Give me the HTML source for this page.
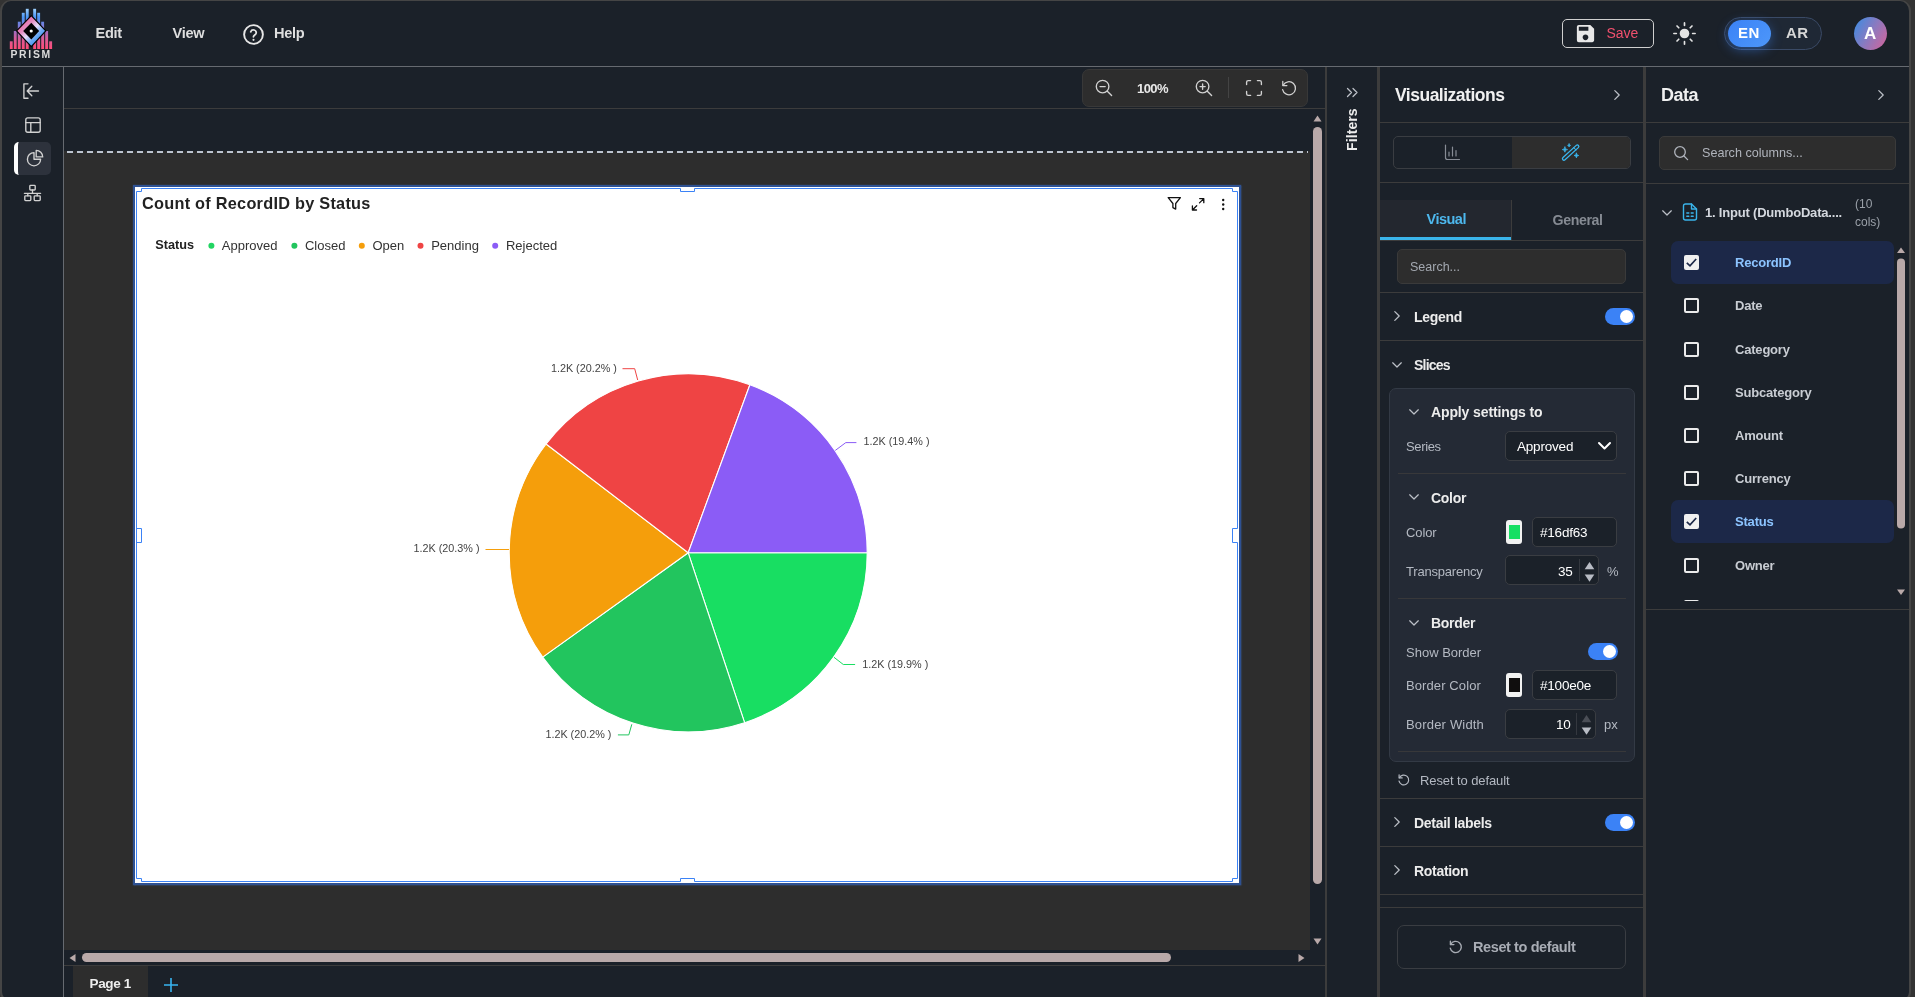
<!DOCTYPE html>
<html lang="en">
<head>
<meta charset="utf-8">
<title>PRISM - Report Designer</title>
<style>
*{box-sizing:border-box;margin:0;padding:0}
html,body{width:1915px;height:997px;overflow:hidden;background:#333333;font-family:"Liberation Sans",sans-serif;color:#e4e4e4}
.abs{position:absolute}
#win{position:absolute;left:0;top:0;width:1911px;height:1003px;background:#1b2129;border:2px solid #454545;border-top-width:1px;border-radius:11px;overflow:hidden}
#app{position:absolute;left:-2px;top:-1px;width:1915px;height:997px;will-change:transform}
.hl{position:absolute;height:1px;background:#3c3c3c}
.vl{position:absolute;width:1px;background:#3c3c3c}
.t{position:absolute;white-space:nowrap;line-height:1}
svg{position:absolute;overflow:visible}
.ico{fill:none;stroke:#d2d2d2;stroke-width:1.35;stroke-linecap:round;stroke-linejoin:round}
.mn{font-size:14.6px;font-weight:bold;color:#dedede;letter-spacing:-0.3px}

.h1{font-size:17.5px;font-weight:bold;color:#f0f0f0;letter-spacing:-0.5px}
.sec{font-size:14px;font-weight:bold;color:#ececec;letter-spacing:-0.3px}
.lb{font-size:13px;color:#b4b9c2;letter-spacing:-0.1px}
.inp{position:absolute;background:#1b2129;border:1px solid #3a3d42;border-radius:5px}
.val{font-size:13.5px;color:#fff;letter-spacing:-0.2px}
.tg{position:absolute;width:30px;height:17px;border-radius:9px;background:#3b82f6}
.tg:after{content:"";position:absolute;right:2px;top:2px;width:13px;height:13px;border-radius:50%;background:#fff}
.chev{fill:none;stroke:#bcc0c7;stroke-width:1.25;stroke-linecap:round;stroke-linejoin:round}
.sw{position:absolute;width:16px;height:24px;background:#f2f2f2;border-radius:3px}
.sw i{position:absolute;left:2.500px;top:5px;width:11px;height:14px}
.col{font-size:13px;font-weight:bold;color:#c9cdd3;letter-spacing:-0.2px}
.cb{position:absolute;width:15px;height:15px;border:2px solid #ebebeb;border-radius:2px}
.cbx{position:absolute;width:15px;height:15px;background:#f0f0f0;border-radius:2px}
/* SECTION-CSS */
</style>
</head>
<body>
<div id="win"><div id="app">

<!-- ===== TOP BAR ===== -->
<div class="hl" style="left:0;top:66px;width:1915px;background:#666a70"></div>

<!-- logo -->
<svg style="left:0;top:0" width="64" height="66" viewBox="0 0 64 66">
 <defs>
  <linearGradient id="lgBars" gradientUnits="userSpaceOnUse" x1="0" y1="8" x2="0" y2="49">
   <stop offset="0" stop-color="#a5d6ff"/><stop offset="0.22" stop-color="#4a96f5"/><stop offset="0.5" stop-color="#8b74d0"/><stop offset="0.75" stop-color="#d85c98"/><stop offset="1" stop-color="#ff4d78"/>
  </linearGradient>
  <linearGradient id="lgDia" gradientUnits="userSpaceOnUse" x1="22" y1="22" x2="41" y2="41">
   <stop offset="0" stop-color="#ea6aa6"/><stop offset="0.25" stop-color="#e58cc0"/><stop offset="0.5" stop-color="#e6dcfa"/><stop offset="0.75" stop-color="#6aa8f2"/><stop offset="1" stop-color="#2f8ef5"/>
  </linearGradient>
 </defs>
 <g fill="url(#lgBars)">
  <rect x="9.8" y="41.3" width="2.9" height="7.7"/><rect x="13.8" y="31" width="2.9" height="18"/><rect x="17.8" y="21.7" width="2.9" height="27.3"/><rect x="21.8" y="12.8" width="2.9" height="36.2"/><rect x="25.8" y="8.8" width="2.9" height="40.2"/>
  <rect x="33.2" y="8.8" width="2.9" height="40.2"/><rect x="37.2" y="12.8" width="2.9" height="36.2"/><rect x="41.2" y="21.7" width="2.9" height="27.3"/><rect x="45.2" y="31" width="2.9" height="18"/><rect x="49.2" y="41.3" width="2.9" height="7.7"/>
 </g>
 <path d="M31.3 15.6 L45.8 30.8 L31.3 46.6 L16.6 30.8 Z" fill="url(#lgDia)" stroke="#000" stroke-width="1.2" stroke-linejoin="round"/>
 <path d="M31.3 22.8 L39.2 30.9 L31.3 39.6 L23.2 30.9 Z" fill="#000"/>
 <circle cx="31.2" cy="31" r="1.6" fill="#fff"/>
 <text x="31.2" y="58" text-anchor="middle" font-family="Liberation Sans, sans-serif" font-weight="bold" font-size="10.4" letter-spacing="1.7" fill="#dcdcdc">PRISM</text>
</svg>
<div class="t mn" style="left:95.500px;top:26px">Edit</div>
<div class="t mn" style="left:172.500px;top:26px">View</div>
<svg style="left:241.500px;top:22.800px" width="23" height="23" viewBox="0 0 24 24"><circle cx="12" cy="12" r="9.800" fill="none" stroke="#e6e6e6" stroke-width="2"/><path d="M9.1 9.2a3 3 0 0 1 5.8 1c0 2-3 2.6-3 4.2" fill="none" stroke="#e6e6e6" stroke-width="1.8" stroke-linecap="round"/><circle cx="12" cy="17.6" r="1.1" fill="#e6e6e6"/></svg>
<div class="t mn" style="left:274px;top:26px">Help</div>

<!-- save button -->
<div class="abs" style="left:1562px;top:19px;width:92px;height:29px;border:1px solid #cfcfcf;border-radius:5px"></div>
<svg style="left:1574px;top:22px" width="23" height="23" viewBox="0 0 24 24"><path fill="#e8e8e8" d="M17 3H5a2 2 0 0 0-2 2v14a2 2 0 0 0 2 2h14c1.100 0 2-.9 2-2V7l-4-4zm-5 16c-1.660 0-3-1.340-3-3s1.340-3 3-3 3 1.340 3 3-1.340 3-3 3zm3-10H5V5h10v4z"/></svg>
<div class="t" style="left:1606.500px;top:26px;font-size:14px;color:#f0506e;letter-spacing:0px">Save</div>
<!-- sun -->
<svg style="left:1672px;top:21px" width="25" height="25" viewBox="0 0 24 24"><circle cx="12" cy="12" r="4.6" fill="#e4e4e4"/><g stroke="#e4e4e4" stroke-width="1.6" stroke-linecap="round"><path d="M12 1.800v2.400M12 19.800v2.400M1.800 12h2.400M19.800 12h2.400M4.800 4.800l1.700 1.700M17.500 17.500l1.700 1.700M4.800 19.200l1.700-1.700M17.500 6.500l1.700-1.700"/></g></svg>
<!-- language toggle -->
<div class="abs" style="left:1724px;top:17px;width:98px;height:33px;border:1px solid #3a4a66;border-radius:17px;background:#1f2835"></div>
<div class="abs" style="left:1728px;top:20px;width:43px;height:27px;border-radius:14px;background:linear-gradient(135deg,#3b82f6,#4d97fa);box-shadow:0 3px 12px rgba(59,130,246,0.45)"></div>
<div class="t" style="left:1738px;top:25px;font-size:15px;font-weight:bold;color:#fff;letter-spacing:0.4px">EN</div>
<div class="t" style="left:1786px;top:25px;font-size:15px;font-weight:bold;color:#d6d6d6;letter-spacing:0.4px">AR</div>
<!-- avatar -->
<div class="abs" style="left:1854px;top:17px;width:33px;height:33px;border-radius:50%;background:linear-gradient(120deg,#3f8be0 5%,#8a7ac0 50%,#d0659c 95%)"></div>
<div class="t" style="left:1864px;top:25px;font-size:17px;font-weight:bold;color:#fff">A</div>


<!-- ===== LEFT SIDEBAR ===== -->
<div class="vl" style="left:63px;top:67px;height:930px;background:#666a70"></div>

<svg style="left:21px;top:81px" width="20" height="20" viewBox="0 0 20 20" class="ico"><path d="M7 2.800H2.900v14.400H7"/><path d="M17.500 10H6.500M10.800 5.300L6.200 10l4.600 4.700"/></svg>
<svg style="left:23px;top:115px" width="20" height="20" viewBox="0 0 20 20" class="ico"><rect x="2.800" y="2.800" width="14.400" height="14.400" rx="2"/><path d="M2.800 7.600h14.400M7.800 7.600v9.600"/></svg>
<div class="abs" style="left:14px;top:142px;width:37px;height:33px;background:#2d323c;border-radius:5px;border-left:4px solid #fff"></div>
<svg style="left:25px;top:148px" width="20" height="20" viewBox="0 0 20 20" class="ico"><path d="M9 4.600A6.600 6.600 0 1 0 15.600 11.200H9z"/><path d="M11.200 2.400v6.500h6.500A6.500 6.500 0 0 0 11.200 2.400z"/></svg>
<svg style="left:22px;top:183px" width="21" height="20" viewBox="0 0 21 20" class="ico"><rect x="7.800" y="2.400" width="5.400" height="4.600" rx="0.800"/><rect x="2.800" y="12.800" width="6" height="4.800" rx="0.800"/><rect x="12.200" y="12.800" width="6" height="4.800" rx="0.800"/><path d="M10.500 7v3.300M2.400 10.300h16.200M5.800 10.300v2.500M15.200 10.300v2.500"/></svg>


<!-- ===== CANVAS ===== -->
<div class="hl" style="left:64px;top:108px;width:1261px"></div>
<div class="abs" style="left:64px;top:151px;width:1246px;height:799px;background:#2d2d2d"></div>

<!-- zoom toolbar -->
<div class="abs" style="left:1082px;top:69px;width:226px;height:38px;background:#2d2d2d;border:1px solid #383838;border-radius:7px"></div>
<svg style="left:1094px;top:78px" width="20" height="20" viewBox="0 0 20 20" class="ico" stroke-width="1.5"><circle cx="8.600" cy="8.600" r="6.300"/><path d="M13.300 13.300L17.600 17.600M6 8.600h5.200"/></svg>
<div class="t" style="left:1137px;top:82px;font-size:13px;font-weight:bold;color:#e8e8e8;letter-spacing:-0.55px">100%</div>
<svg style="left:1194px;top:78px" width="20" height="20" viewBox="0 0 20 20" class="ico"><circle cx="8.600" cy="8.600" r="6.300"/><path d="M13.300 13.300L17.600 17.600M6 8.600h5.200M8.600 6v5.200"/></svg>
<div class="vl" style="left:1228px;top:77px;height:21px;background:#444"></div>
<svg style="left:1244px;top:78px" width="20" height="20" viewBox="0 0 20 20" class="ico"><path d="M2.600 6.600V4.200Q2.600 2.600 4.200 2.600H6.600M13.400 2.600h2.400Q17.400 2.600 17.400 4.200V6.600M17.400 13.400v2.400Q17.400 17.400 15.800 17.400H13.400M6.600 17.400H4.200Q2.600 17.400 2.600 15.800V13.400"/></svg>
<svg style="left:1279.500px;top:78.500px" width="18.600" height="18.600" viewBox="0 0 20 20" class="ico" stroke-width="1.450"><path d="M3.400 6.800A7 7 0 1 1 2.800 11.400"/><path d="M3 2.600v4.400h4.400"/></svg>

<!-- page boundary dashed line -->
<svg style="left:0;top:0" width="1320" height="160"><path d="M67 152H1308" stroke="#bdc4cf" stroke-width="2" stroke-dasharray="6 4" fill="none"/></svg>

<!-- vertical scrollbar -->
<svg style="left:1310px;top:109px" width="15" height="841"><path d="M7.500 6.500l4 6h-8z" fill="#b9a9a9"/><rect x="3" y="18" width="9" height="757" rx="4.500" fill="#b9a9a9"/><path d="M7.500 835.500l4 -6h-8z" fill="#b9a9a9"/></svg>
<!-- horizontal scrollbar -->
<svg style="left:64px;top:950px" width="1246" height="15"><path d="M5.500 8l6-4v8z" fill="#b9a9a9"/><rect x="18" y="3" width="1089" height="9" rx="4.500" fill="#b9a9a9"/><path d="M1240.500 8l-6-4v8z" fill="#b9a9a9"/></svg>
<div class="hl" style="left:64px;top:965px;width:1261px"></div>

<!-- page tabs -->
<div class="abs" style="left:73px;top:966px;width:75px;height:31px;background:#2d2d2d"></div>
<div class="t" style="left:89.500px;top:977px;font-size:13.500px;font-weight:bold;color:#eee;letter-spacing:-0.35px">Page 1</div>
<svg style="left:163px;top:977px" width="16" height="16"><path d="M8 1v14M1 8h14" stroke="#38b4f0" stroke-width="1.600" fill="none"/></svg>

<!-- chart widget -->
<div class="abs" style="left:135px;top:187px;width:1104px;height:696px;background:#fff;box-shadow:0 0 0 2px #2e5192,0 0 1.500px 2.500px #3a5f9f"></div>
<svg style="left:135px;top:187px" width="1104" height="696" viewBox="135 187 1104 696">
 <path d="M136.500 191.500V878.500H141.500V881.500H680.500V878.500H694.500V881.500H1232.500V878.500H1237.500V542.500H1232.500V528.500H1237.500V191.500H1232.500V188.500H694.500V191.500H680.500V188.500H141.500V191.500ZM136.500 528.500H141.500V542.500H136.500" fill="none" stroke="#3b82f6" stroke-width="1"/>
 <text x="142" y="208.600" font-family="Liberation Sans, sans-serif" font-weight="bold" font-size="16.300" letter-spacing="0.260" fill="#222">Count of RecordID by Status</text>
 <g fill="none" stroke="#111" stroke-width="1.300" stroke-linejoin="round" stroke-linecap="round">
  <path d="M1168.200 197.600h12.200l-4.700 5.900v5.600l-2.800-1.500v-4.100z"/>
  <path d="M1203.800 198.600l-4.300 4.300M1199.700 198.600h4.100v4.100M1192.400 210l4.300-4.300M1192.400 205.900v4.100h4.100"/>
 </g>
 <g fill="#111"><circle cx="1223.200" cy="200" r="1.200"/><circle cx="1223.200" cy="204.500" r="1.200"/><circle cx="1223.200" cy="209" r="1.200"/></g>
 <g font-family="Liberation Sans, sans-serif" font-size="13" fill="#333">
  <text x="155.200" y="248.600" font-weight="bold" font-size="12.700" fill="#222">Status</text>
  <circle cx="211.400" cy="245.700" r="3" fill="#22d562"/><text x="221.800" y="250">Approved</text>
  <circle cx="294.400" cy="245.700" r="3" fill="#22c55e"/><text x="304.900" y="250">Closed</text>
  <circle cx="361.800" cy="245.700" r="3" fill="#f59e0b"/><text x="372.500" y="250">Open</text>
  <circle cx="420.500" cy="245.700" r="3" fill="#ef4444"/><text x="431.200" y="250">Pending</text>
  <circle cx="495.200" cy="245.700" r="3" fill="#8b5cf6"/><text x="505.900" y="250">Rejected</text>
 </g>
 <path d="M688.2 552.8L867.2 552.8A179 179 0 0 1 744.6 722.7Z" fill="#18de62" stroke="#fff" stroke-width="1.1" stroke-linejoin="round"/>
<path d="M688.2 552.8L744.6 722.7A179 179 0 0 1 542.7 657.1Z" fill="#22c55e" stroke="#fff" stroke-width="1.1" stroke-linejoin="round"/>
<path d="M688.2 552.8L542.7 657.1A179 179 0 0 1 546.1 444.0Z" fill="#f59e0b" stroke="#fff" stroke-width="1.1" stroke-linejoin="round"/>
<path d="M688.2 552.8L546.1 444.0A179 179 0 0 1 749.9 384.8Z" fill="#ef4444" stroke="#fff" stroke-width="1.1" stroke-linejoin="round"/>
<path d="M688.2 552.8L749.9 384.8A179 179 0 0 1 867.2 552.8Z" fill="#8b5cf6" stroke="#fff" stroke-width="1.1" stroke-linejoin="round"/>

 <g fill="none" stroke-width="1">
  <path d="M622.500 368.700H634.700L637.700 380" stroke="#ef4444"/>
  <path d="M835.300 450.400L845.800 442.600H856.400" stroke="#8b5cf6"/>
  <path d="M485.500 549.500H509" stroke="#f59e0b"/>
  <path d="M834 657.300L843.300 664.500H855.100" stroke="#1bde63"/>
  <path d="M617.900 734.900H628.800L631.800 724.300" stroke="#22c55e"/>
 </g>
 <g font-family="Liberation Sans, sans-serif" font-size="10.800" fill="#444">
  <text x="550.900" y="371.700">1.2K (20.2% )</text>
  <text x="863.500" y="445.400">1.2K (19.4% )</text>
  <text x="413.500" y="552.400">1.2K (20.3% )</text>
  <text x="862.300" y="667.500">1.2K (19.9% )</text>
  <text x="545.400" y="737.900">1.2K (20.2% )</text>
 </g>
</svg>


<!-- ===== FILTERS STRIP ===== -->
<div class="vl" style="left:1325px;top:67px;height:930px;width:2px"></div>
<div class="vl" style="left:1377px;top:67px;height:930px;width:3px"></div>

<svg style="left:1345px;top:86px" width="14" height="13" viewBox="0 0 14 13" class="chev" stroke="#e0e0e0" stroke-width="1.500"><path d="M2.500 2.500l4 4-4 4M8 2.500l4 4-4 4"/></svg>
<div class="t" style="left:1332px;top:124px;width:40px;text-align:center;font-size:14px;font-weight:bold;color:#ececec;transform:rotate(-90deg);transform-origin:50% 50%;letter-spacing:0.1px">Filters</div>


<!-- ===== VISUALIZATIONS PANEL ===== -->

<div class="t h1" style="left:1395px;top:87px">Visualizations</div>
<svg style="left:1613px;top:89px" width="8" height="12" viewBox="0 0 8 12" class="chev"><path d="M1.800 1.600L6.200 6 1.800 10.400"/></svg>
<div class="hl" style="left:1380px;top:122px;width:263px"></div>
<div class="abs" style="left:1393px;top:136px;width:238px;height:33px;border:1px solid #3a3d42;border-radius:5px;overflow:hidden"><div class="abs" style="left:118px;top:0;width:120px;height:33px;background:#2d2d2d"></div></div>
<svg style="left:1444px;top:144px" width="17" height="17" viewBox="0 0 17 17" fill="none" stroke="#878c95" stroke-width="1.200" stroke-linecap="round" stroke-linejoin="round"><path d="M1.500 1v12.500Q1.500 15.500 3.500 15.500H15.500"/><path d="M5 8v4M8.500 3v9M12 6.500v5.500"/></svg>
<svg style="left:1561px;top:143px" width="19" height="19" viewBox="0 0 19 19" fill="none" stroke-linecap="round" stroke-linejoin="round"><path d="M3 15.700L16.300 3.500" stroke="#3ab7f0" stroke-width="4.300" stroke-linecap="round"/><path d="M3 15.700L16.300 3.500" stroke="#2d2d2d" stroke-width="1.800"/><path d="M12.700 4.500l2.300 2.500" stroke="#3ab7f0" stroke-width="1.100"/><path d="M3.9 4.00Q3.9 6.6 6.50 6.6Q3.9 6.6 3.9 9.20Q3.9 6.6 1.30 6.6Q3.9 6.6 3.9 4.00ZM8.1 0.90Q8.1 2.4 9.60 2.4Q8.1 2.4 8.1 3.90Q8.1 2.4 6.60 2.4Q8.1 2.4 8.1 0.90ZM15.4 10.20Q15.4 12.5 17.70 12.5Q15.4 12.5 15.4 14.80Q15.4 12.5 13.10 12.5Q15.4 12.5 15.4 10.20Z" fill="#3ab7f0" stroke="#3ab7f0" stroke-width="0.800"/></svg>
<div class="hl" style="left:1380px;top:182px;width:263px"></div>
<div class="abs" style="left:1380px;top:200px;width:131px;height:38px;background:#23272f"></div>
<div class="vl" style="left:1511px;top:200px;height:40px"></div>
<div class="hl" style="left:1380px;top:240px;width:263px"></div>
<div class="abs" style="left:1380px;top:237px;width:131px;height:3px;background:#3ab4ea"></div>
<div class="t" style="left:1426.500px;top:212px;font-size:14.500px;font-weight:bold;color:#4db8ee;letter-spacing:-0.5px">Visual</div>
<div class="t" style="left:1552.500px;top:213px;font-size:14.200px;font-weight:bold;color:#868b93;letter-spacing:-0.4px">General</div>
<div class="abs" style="left:1397px;top:249px;width:229px;height:35px;background:#2d2d2d;border:1px solid #3a3a3a;border-radius:5px"></div>
<div class="t" style="left:1410px;top:261px;font-size:12.500px;color:#a3a8b0">Search...</div>
<div class="hl" style="left:1380px;top:292px;width:263px"></div>
<svg style="left:1393px;top:310px" width="8" height="12" viewBox="0 0 8 12" class="chev"><path d="M1.800 1.600L6.200 6 1.800 10.400"/></svg>
<div class="t sec" style="left:1414px;top:310px">Legend</div>
<div class="tg" style="left:1605px;top:308px"></div>
<div class="hl" style="left:1380px;top:340px;width:263px"></div>
<svg style="left:1391px;top:361px" width="12" height="8" viewBox="0 0 12 8" class="chev"><path d="M1.700 1.800L6 6 10.300 1.800"/></svg>
<div class="t sec" style="left:1414px;top:358px;letter-spacing:-0.8px">Slices</div>
<div class="abs" style="left:1389px;top:388px;width:246px;height:374px;background:#242a35;border:1px solid #333a45;border-radius:7px"></div>
<svg style="left:1408px;top:408px" width="12" height="8" viewBox="0 0 12 8" class="chev"><path d="M1.700 1.800L6 6 10.300 1.800"/></svg>
<div class="t sec" style="left:1431px;top:405px;letter-spacing:-0.12px">Apply settings to</div>
<div class="t lb" style="left:1406px;top:440px;letter-spacing:-0.35px">Series</div>
<div class="inp" style="left:1505px;top:431px;width:112px;height:30px"></div>
<div class="t val" style="left:1517px;top:440px">Approved</div>
<svg style="left:1597px;top:441px" width="15" height="10" viewBox="0 0 15 10" fill="none" stroke="#fff" stroke-width="2" stroke-linecap="round" stroke-linejoin="round"><path d="M2 2l5.500 5.500L13 2"/></svg>
<div class="hl" style="left:1398px;top:473px;width:228px;background:#38383a"></div>
<svg style="left:1408px;top:493px" width="12" height="8" viewBox="0 0 12 8" class="chev"><path d="M1.700 1.800L6 6 10.300 1.800"/></svg>
<div class="t sec" style="left:1431px;top:491px">Color</div>
<div class="t lb" style="left:1406px;top:526px">Color</div>
<div class="sw" style="left:1506px;top:520px"><i style="background:#16df63"></i></div>
<div class="inp" style="left:1532px;top:517px;width:85px;height:30px"></div>
<div class="t val" style="left:1540px;top:526px">#16df63</div>
<div class="t lb" style="left:1406px;top:565px;letter-spacing:-0.2px">Transparency</div>
<div class="inp" style="left:1505px;top:555px;width:94px;height:30px"></div>
<div class="t val" style="left:1558px;top:565px">35</div>
<div class="vl" style="left:1579px;top:559px;height:22px;background:#34383f"></div>
<svg style="left:1584px;top:561px" width="11" height="22" viewBox="0 0 11 22"><path d="M5.500 1l4.800 7.200H0.700z" fill="#b8bcc4"/><path d="M5.500 20.800l4.800-7.200H0.700z" fill="#b8bcc4"/></svg>
<div class="t lb" style="left:1607px;top:565px">%</div>
<div class="hl" style="left:1398px;top:598px;width:228px;background:#38383a"></div>
<svg style="left:1408px;top:619px" width="12" height="8" viewBox="0 0 12 8" class="chev"><path d="M1.700 1.800L6 6 10.300 1.800"/></svg>
<div class="t sec" style="left:1431px;top:616px">Border</div>
<div class="t lb" style="left:1406px;top:646px;letter-spacing:0px">Show Border</div>
<div class="tg" style="left:1588px;top:643px"></div>
<div class="t lb" style="left:1406px;top:679px;letter-spacing:0.1px">Border Color</div>
<div class="sw" style="left:1506px;top:673px"><i style="background:#100e0e"></i></div>
<div class="inp" style="left:1532px;top:670px;width:85px;height:30px"></div>
<div class="t val" style="left:1540px;top:679px">#100e0e</div>
<div class="t lb" style="left:1406px;top:718px;letter-spacing:0.18px">Border Width</div>
<div class="inp" style="left:1505px;top:709px;width:91px;height:30px"></div>
<div class="t val" style="left:1556px;top:718px">10</div>
<div class="vl" style="left:1576px;top:713px;height:22px;background:#34383f"></div>
<svg style="left:1581px;top:714px" width="11" height="22" viewBox="0 0 11 22"><path d="M5.500 1l4.800 7.200H0.700z" fill="#4a4e56"/><path d="M5.500 20.800l4.800-7.200H0.700z" fill="#b8bcc4"/></svg>
<div class="t lb" style="left:1604px;top:718px">px</div>
<div class="hl" style="left:1398px;top:751px;width:228px;background:#38383a"></div>
<svg style="left:1397px;top:773px" width="14" height="14" viewBox="0 0 20 20" fill="none" stroke="#b4b9c2" stroke-width="1.700" stroke-linecap="round" stroke-linejoin="round"><path d="M3.400 6.800A7 7 0 1 1 2.800 11.400"/><path d="M3 2.600v4.400h4.400"/></svg>
<div class="t lb" style="left:1420px;top:774px">Reset to default</div>
<div class="hl" style="left:1380px;top:798px;width:263px"></div>
<svg style="left:1393px;top:816px" width="8" height="12" viewBox="0 0 8 12" class="chev"><path d="M1.800 1.600L6.200 6 1.800 10.400"/></svg>
<div class="t sec" style="left:1414px;top:816px">Detail labels</div>
<div class="tg" style="left:1605px;top:814px"></div>
<div class="hl" style="left:1380px;top:846px;width:263px"></div>
<svg style="left:1393px;top:864px" width="8" height="12" viewBox="0 0 8 12" class="chev"><path d="M1.800 1.600L6.200 6 1.800 10.400"/></svg>
<div class="t sec" style="left:1414px;top:864px">Rotation</div>
<div class="hl" style="left:1380px;top:894px;width:263px"></div>
<div class="hl" style="left:1380px;top:907px;width:263px"></div>
<div class="abs" style="left:1397px;top:925px;width:229px;height:44px;border:1px solid #3a3d42;border-radius:7px"></div>
<svg style="left:1448px;top:939px" width="16" height="16" viewBox="0 0 20 20" fill="none" stroke="#a8acb4" stroke-width="1.700" stroke-linecap="round" stroke-linejoin="round"><path d="M3.400 6.800A7 7 0 1 1 2.800 11.400"/><path d="M3 2.600v4.400h4.400"/></svg>
<div class="t" style="left:1473px;top:940px;font-size:14.500px;font-weight:bold;color:#a8acb4;letter-spacing:-0.4px">Reset to default</div>


<!-- ===== DATA PANEL ===== -->
<div class="vl" style="left:1643px;top:67px;height:930px;width:3px"></div>

<div class="t h1" style="left:1661px;top:86px;font-size:18px">Data</div>
<svg style="left:1877px;top:89px" width="8" height="12" viewBox="0 0 8 12" class="chev"><path d="M1.800 1.600L6.200 6 1.800 10.400"/></svg>
<div class="hl" style="left:1646px;top:122px;width:265px"></div>
<div class="abs" style="left:1659px;top:136px;width:237px;height:34px;background:#2d2d2d;border:1px solid #3a3a3a;border-radius:5px"></div>
<svg style="left:1673px;top:145px" width="16" height="16" viewBox="0 0 16 16" fill="none" stroke="#b0b4bc" stroke-width="1.300" stroke-linecap="round"><circle cx="7" cy="7" r="5.300"/><path d="M11 11l3.600 3.600"/></svg>
<div class="t" style="left:1702px;top:147px;font-size:12.600px;color:#b0b4bc">Search columns...</div>
<div class="hl" style="left:1646px;top:183px;width:265px"></div>
<svg style="left:1661px;top:209px" width="12" height="8" viewBox="0 0 12 8" class="chev"><path d="M1.700 1.800L6 6 10.300 1.800"/></svg>
<svg style="left:1682px;top:203px" width="16" height="18" viewBox="0 0 16 18" fill="none" stroke="#3ab4ea" stroke-width="1.400" stroke-linejoin="round" stroke-linecap="round"><path d="M9.500 1H3.500Q1.500 1 1.500 3V15Q1.500 17 3.500 17H12.500Q14.500 17 14.500 15V6Z"/><path d="M9.500 1V6H14.500"/><path d="M4.800 10h2M9.200 10h2M4.800 13.300h2M9.200 13.300h2"/></svg>
<div class="t col" style="left:1705px;top:206px;color:#d4d8de">1. Input (DumboData....</div>
<div class="t" style="left:1855px;top:198px;font-size:12px;color:#9aa0a8">(10</div>
<div class="t" style="left:1855px;top:216px;font-size:12px;color:#9aa0a8">cols)</div>
<div class="abs" style="left:1646px;top:236px;width:265px;height:365px;overflow:hidden"><div class="abs" style="left:-1646px;top:-236px;width:1915px;height:997px">
<div class="abs" style="left:1671px;top:240.5px;width:223px;height:43px;background:#1c2848;border-radius:7px"></div>
<div class="cbx" style="left:1684px;top:254.5px"><svg style="left:0;top:0" width="15" height="15" viewBox="0 0 15 15" fill="none" stroke="#1c2848" stroke-width="1.700"><path d="M2.800 7.800l3.200 3 6.200-6.800"/></svg></div>
<div class="t col" style="left:1735px;top:255.5px;color:#8cc4ff">RecordID</div>
<div class="cb" style="left:1684px;top:298.0px"></div>
<div class="t col" style="left:1735px;top:299.0px">Date</div>
<div class="cb" style="left:1684px;top:341.7px"></div>
<div class="t col" style="left:1735px;top:342.7px">Category</div>
<div class="cb" style="left:1684px;top:384.7px"></div>
<div class="t col" style="left:1735px;top:385.7px">Subcategory</div>
<div class="cb" style="left:1684px;top:428.0px"></div>
<div class="t col" style="left:1735px;top:429.0px">Amount</div>
<div class="cb" style="left:1684px;top:471.0px"></div>
<div class="t col" style="left:1735px;top:472.0px">Currency</div>
<div class="abs" style="left:1671px;top:500.2px;width:223px;height:43px;background:#1c2848;border-radius:7px"></div>
<div class="cbx" style="left:1684px;top:514.2px"><svg style="left:0;top:0" width="15" height="15" viewBox="0 0 15 15" fill="none" stroke="#1c2848" stroke-width="1.700"><path d="M2.800 7.800l3.200 3 6.200-6.800"/></svg></div>
<div class="t col" style="left:1735px;top:515.2px;color:#8cc4ff">Status</div>
<div class="cb" style="left:1684px;top:557.8px"></div>
<div class="t col" style="left:1735px;top:558.8px">Owner</div>

<div class="cb" style="left:1684px;top:600px"></div>
</div></div>
<svg style="left:1896px;top:244px" width="10" height="355"><path d="M5 3.500l4 5.500h-8z" fill="#b9a9a9"/><rect x="1" y="14.500" width="8" height="270" rx="4" fill="#b9a9a9"/><path d="M5 351l4-5.500h-8z" fill="#b9a9a9"/></svg>
<div class="hl" style="left:1646px;top:609px;width:265px"></div>


</div></div>
</body>
</html>
